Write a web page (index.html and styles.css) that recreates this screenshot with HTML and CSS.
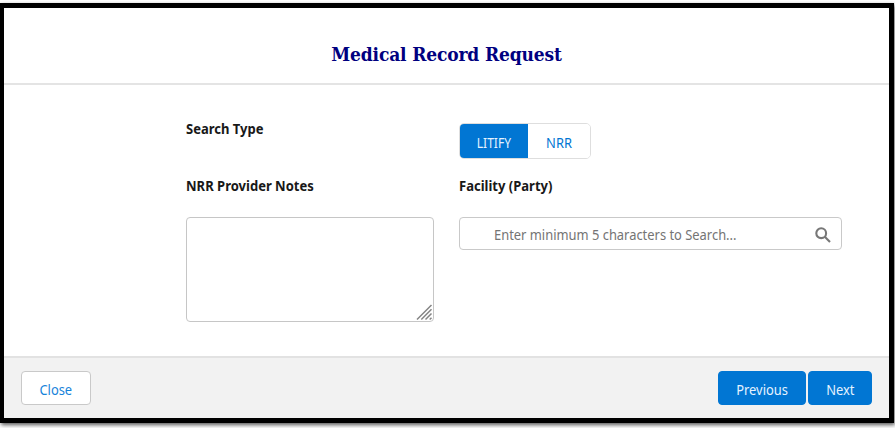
FILE: index.html
```
<!DOCTYPE html>
<html lang="en">
<head>
<meta charset="utf-8">
<title>Medical Record Request</title>
<link rel="stylesheet" href="styles.css">
</head>
<body>
<main class="modal">
  <header class="modal-header"><h1>Medical Record Request</h1></header>
  <section class="form">
    <div class="label">Search Type</div>
    <div class="toggle">
      <button class="option selected"><span class="text litify">LITIFY</span></button>
      <button class="option"><span class="text">NRR</span></button>
    </div>
    <div class="label">NRR Provider Notes</div>
    <div class="label">Facility (Party)</div>
    <div class="notes">
      <svg class="grip" width="17" height="17" viewBox="0 0 17 17"><path d="M1 15.5 15.5 1M5.3 15.5 15.5 5.3M9.5 15.5l6-6M13.7 15.5l1.8-1.8"/></svg>
    </div>
    <div class="search">
      <span class="placeholder">Enter minimum 5 characters to Search...</span>
      <svg class="glass" width="16" height="16" viewBox="0 0 16 16"><circle cx="6.2" cy="6.2" r="4.9"/><path d="m9.8 9.8 5.2 5.2"/></svg>
    </div>
  </section>
  <footer class="modal-footer">
    <button class="btn close"><span class="text">Close</span></button>
    <button class="btn primary previous"><span class="text">Previous</span></button>
    <button class="btn primary next"><span class="text">Next</span></button>
  </footer>
</main>
</body>
</html>
```
FILE: styles.css
```
* { box-sizing: border-box; }
body {
  margin: 0;
  height: 428px;
  overflow: hidden;
  background: #fff;
  font: 14px/18px "Noto Sans", "Open Sans", sans-serif;
}
.modal {
  display: flex;
  flex-direction: column;
  width: 894px;
  height: 420px;
  margin-top: 3px;
  border: 5px solid #000;
  border-left-width: 4px;
  box-shadow: 1px 2px 4px rgba(0, 0, 0, .65);
  background: #fff;
}
.modal-header {
  height: 77px;
  padding-top: 32px;
  border-bottom: 2px solid #e4e4e4;
}
h1 {
  margin: 0;
  font: bold 19px/28px "DejaVu Serif Condensed", "DejaVu Serif", serif;
  letter-spacing: -0.15px;
  color: #000080;
  text-align: center;
  white-space: nowrap;
}
.form {
  flex: 1;
  display: grid;
  grid-template-columns: 248px 383px;
  grid-template-rows: 57px 38px 105px;
  column-gap: 25px;
  align-content: start;
  padding: 35px 0 0 182px;
}
.label {
  font-weight: 700;
  color: #181818;
  white-space: nowrap;
  transform: scaleX(.93);
  transform-origin: left;
}
.toggle {
  display: flex;
  width: 132px;
  height: 36px;
  margin-top: 3px;
  border: 1px solid #dedede;
  border-radius: 5px;
  overflow: hidden;
}
button { font: inherit; padding: 0; white-space: nowrap; }
.text { display: inline-block; transform: scaleX(.92); }
.litify { transform: scaleX(.86); }
.option {
  width: 62px;
  border: 0;
  background: #fff;
  color: #0176d3;
  padding-top: 4px;
}
.option.selected { width: 68px; background: #0176d3; color: #e6f3ff; }
.notes {
  display: flex;
  justify-content: flex-end;
  align-items: flex-end;
  margin-top: 2px;
  height: 105px;
  border: 1px solid #c6c6c6;
  border-radius: 4px;
}
.grip { fill: none; stroke: #858585; stroke-width: 1.5; }
.search {
  display: flex;
  align-items: center;
  justify-content: space-between;
  height: 33px;
  margin-top: 2px;
  padding: 3px 10px 0 34px;
  border: 1px solid #c9c9c9;
  border-radius: 4px;
  color: #747474;
}
.placeholder {
  white-space: nowrap;
  transform: scaleX(.922);
  transform-origin: left;
}
.glass { fill: none; stroke: #777; stroke-width: 2.1; }
.modal-footer {
  display: flex;
  height: 62px;
  padding: 13px 17px 0;
  border-top: 2px solid #e2e2e2;
  background: #f2f2f2;
}
.btn {
  height: 34px;
  border: 1px solid #c9c9c9;
  border-radius: 4px;
  background: #fff;
  color: #1683da;
  padding-top: 3px;
}
.close { width: 70px; margin-right: auto; }
.primary { border-color: #0176d3; background: #0176d3; color: #e6f3ff; }
.previous { width: 88px; margin-right: 2px; }
.next { width: 64px; }
```
